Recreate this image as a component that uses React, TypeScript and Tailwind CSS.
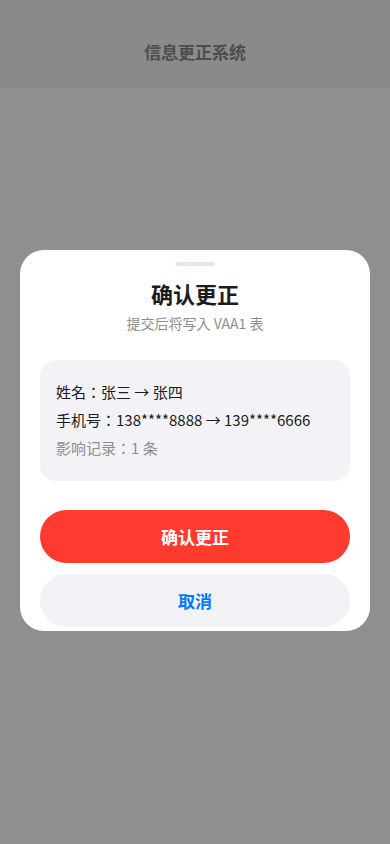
export default function App() {
  return (
    <div
      className="relative min-h-[844px] w-full bg-[#8f8f8f]"
      style={{ fontFamily: '"Noto Sans CJK JP", "Noto Sans", sans-serif' }}
    >
      <header className="h-[88px] bg-[#8a8a8a] flex items-end justify-center pb-[24px]">
        <h1 className="text-[17px] font-semibold text-[#4d4d4d] leading-[24px]">信息更正系统</h1>
      </header>

      <div className="absolute left-[20px] right-[20px] top-[250px] bg-white rounded-[24px] px-[20px] pt-[12px] pb-[4px] flex flex-col items-center">
        <div className="w-[40px] h-[4px] rounded-full bg-[#e5e5ea]" />
        <h2 className="mt-[12px] text-[22px] font-bold leading-[30px] text-[#1c1c1e]">确认更正</h2>
        <p className="mt-[5px] text-[14px] leading-[20px] text-[#8e8e93]">提交后将写入 VAA1 表</p>

        <div className="mt-[27px] w-full bg-[#f2f2f7] rounded-[16px] px-[16px] pt-[18px] pb-[19px] text-[15px] leading-[28px] text-[#1c1c1e]">
          <div>姓名：张三 → 张四</div>
          <div>手机号：138****8888 → 139****6666</div>
          <div className="text-[#8e8e93]">影响记录：1 条</div>
        </div>

        <button
          type="button"
          className="mt-[29px] w-full h-[53px] rounded-full bg-[#ff3b30] text-white text-[17px] font-bold"
        >
          确认更正
        </button>
        <button
          type="button"
          className="mt-[11px] w-full h-[53px] rounded-full bg-[#f2f2f7] text-[#007aff] text-[17px] font-bold"
        >
          取消
        </button>
      </div>
    </div>
  );
}
